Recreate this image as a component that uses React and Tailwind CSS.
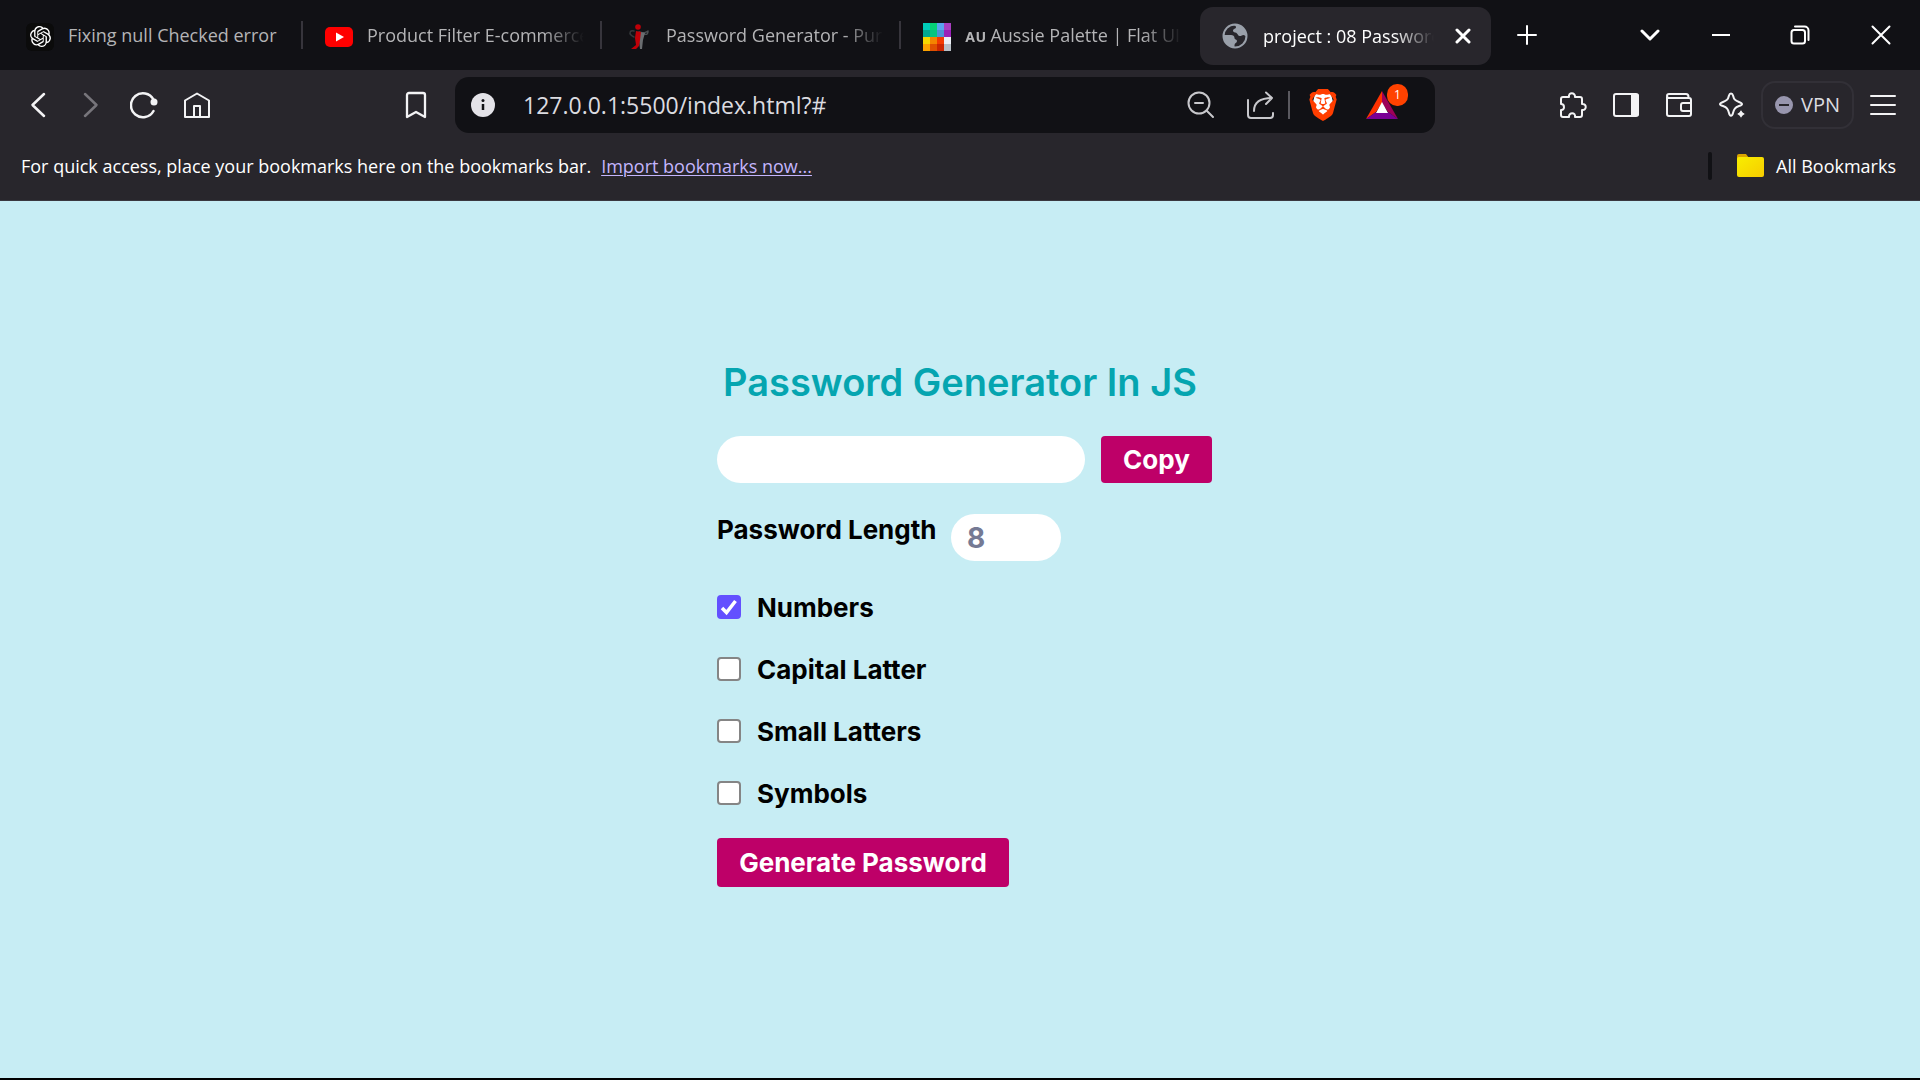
import React from "react";
import { SiOpenai, SiBrave } from "react-icons/si";

function Svg({ w = 28, h = 28, children, className = "" }) {
  return (
    <svg
      width={w}
      height={h}
      viewBox={`0 0 ${w} ${h}`}
      fill="none"
      stroke="currentColor"
      strokeWidth="2"
      strokeLinecap="round"
      strokeLinejoin="round"
      className={`shrink-0 ${className}`}
      aria-hidden="true"
    >
      {children}
    </svg>
  );
}

const YouTube = () => (
  <Svg>
    <rect x="0" y="4" width="28" height="20" rx="5" fill="#ff0000" stroke="none" />
    <path d="M11 9.500v9l8-4.500z" fill="#fff" stroke="none" />
  </Svg>
);

const OpenAI = () => (
  <span className="flex size-7 shrink-0 items-center justify-center rounded-md bg-[#0b0b0b]">
    <SiOpenai className="size-[21px] text-white" />
  </span>
);

const Figure = () => (
  <Svg>
    <path d="M10 8c-4-1-5 2-3 4s2 1 3 2" stroke="#34393c" strokeWidth="1.500" />
    <path d="M15 9c4 2 8 0 9-1M20 11c3 1 4 0 4-3" stroke="#4a4f52" strokeWidth="1.500" />
    <path d="M16 9l5 1-2 7-1 9h-2l-1-9z" fill="#6a6d70" stroke="none" />
    <circle cx="14" cy="4" r="2.800" fill="#c00008" stroke="none" />
    <path d="M12 8l5 1-1 8-1 6-3 3-5 0 5-4-1-7z" fill="#c00008" stroke="none" />
  </Svg>
);

const palette = [
  "#00cdb9", "#06d077", "#5aa4ee", "#a83fc0",
  "#02a890", "#06c47f", "#4c92d4", "#9a20b8",
  "#f5d800", "#f48400", "#f43a00", "#eceef5",
  "#fba200", "#e05000", "#cc2600", "#b8bfc6",
];

const Palette = () => (
  <Svg>
    {palette.map((c, i) => (
      <rect key={i} x={(i % 4) * 7} y={Math.floor(i / 4) * 7} width="7" height="7" fill={c} stroke="none" shapeRendering="crispEdges" />
    ))}
  </Svg>
);

const Globe = () => (
  <Svg>
    <circle cx="14" cy="14" r="11.500" stroke="#9aa0aa" />
    <path
      d="M11 2.500c4-1 9 .5 12 4.500 1.500 2.500 2 5 2 7.500-1-.5-1.500-1.500-2.500-1.500-2 0-2 1.500-4 1-2-.4-1.500-2.300-3.300-3.300-1.200-.7-3-.2-3.200-2 0-2 3-1.700 3-3.700 0-1.500-2.500-1.500-4-2.500zM3 13h7c2 0 3.500 1 3.500 3s2.500 1 2.500 3-2.500 2-2.500 4v2.500C7 25.500 2.500 20 3 13z"
      fill="#9aa0aa"
      stroke="none"
    />
  </Svg>
);

const tabs = [
  { icon: <OpenAI />, title: "Fixing null Checked error" },
  { icon: <YouTube />, title: "Product Filter E-commerce" },
  { icon: <Figure />, title: "Password Generator - Pure" },
  { icon: <Palette />, prefix: "ᴀᴜ", title: "Aussie Palette | Flat UI Colors" },
];

function FadedTitle({ prefix, children, fade = true }) {
  return (
    <span
      className={
        "min-w-0 flex-1 overflow-hidden whitespace-nowrap text-lg leading-7 " +
        (fade ? "[mask-image:linear-gradient(to_right,#000_calc(100%_-_40px),transparent)]" : "")
      }
    >
      {prefix ? <span className="mr-1 font-['Noto_Sans',sans-serif] font-semibold">{prefix}</span> : null}
      {children}
    </span>
  );
}

function TabStrip() {
  return (
    <div className="flex h-[70px] items-center bg-[#111115] pl-1 text-white">
      {tabs.map((t, i) => (
        <button key={t.title} type="button" className="flex h-full w-[299px] min-w-0 items-center pl-[22px] text-left text-[#b4b4b6]">
          <span className="mt-[3px]">{t.icon}</span>
          <span className="ml-[14px] flex min-w-0 flex-1">
            <FadedTitle prefix={t.prefix} fade={i > 0}>{t.title}</FadedTitle>
          </span>
          <span className={"ml-4 h-7 w-0.5 " + (i < 3 ? "bg-[#37353c]" : "")} />
        </button>
      ))}
      <div className="mt-[2px] flex h-[58px] w-[291px] min-w-0 items-center rounded-[13px] bg-[#28262c] pl-[21px] pr-5">
        <Globe />
        <span className="ml-[14px] flex min-w-0 flex-1">
          <FadedTitle>project : 08 Password Generator</FadedTitle>
        </span>
        <button type="button" aria-label="Close tab" className="ml-[21px]">
          <Svg w={16} h={16}><path d="M2 2l12 12M14 2L2 14" strokeWidth="3" /></Svg>
        </button>
      </div>
      <button type="button" aria-label="New tab" className="ml-[26px]">
        <Svg w={20} h={20}><path d="M10 1v18M1 10h18" /></Svg>
      </button>
      <div className="ml-auto flex items-center">
        <button type="button" aria-label="Search tabs" className="flex w-[68px] justify-center">
          <Svg w={20} h={12}><path d="M2 2l8 8 8-8" strokeWidth="3" /></Svg>
        </button>
        <button type="button" aria-label="Minimize" className="flex w-[74px] justify-center">
          <Svg w={20} h={20}><path d="M1 10h18" strokeLinecap="butt" /></Svg>
        </button>
        <button type="button" aria-label="Restore" className="flex w-[84px] justify-center">
          <Svg w={20} h={20}>
            <rect x="1.500" y="5" width="13.500" height="13.500" rx="2.500" />
            <path d="M5 1.500h9.500a4 4 0 0 1 4 4V15" />
          </Svg>
        </button>
        <button type="button" aria-label="Close" className="flex w-[78px] justify-center">
          <Svg w={20} h={20}><path d="M1.500 1.500l17 17M18.500 1.500l-17 17" /></Svg>
        </button>
      </div>
    </div>
  );
}

function ToolButton({ label, children, className = "" }) {
  return (
    <button type="button" aria-label={label} className={`flex h-12 w-[53px] shrink-0 items-center justify-center ${className}`}>
      {children}
    </button>
  );
}

function Toolbar() {
  return (
    <div className="flex h-[70px] items-center px-[11px] text-[#f3f3f5]">
      <ToolButton label="Back"><Svg><path d="M20 3L8.500 14 20 25" strokeWidth="2.500" /></Svg></ToolButton>
      <ToolButton label="Forward" className="text-[#77757b]"><Svg><path d="M8 3l11.500 11L8 25" strokeWidth="2.500" /></Svg></ToolButton>
      <ToolButton label="Reload">
        <Svg>
          <path d="M23.500 8.500A12 12 0 1 0 23.500 20" strokeWidth="2.500" />
          <circle cx="24" cy="11" r="3.500" fill="currentColor" stroke="none" />
        </Svg>
      </ToolButton>
      <ToolButton label="Home">
        <Svg>
          <path d="M2 26V9.500L14 2.500l12 7V26z" />
          <path d="M11 26V15h6v11" />
        </Svg>
      </ToolButton>
      <ToolButton label="Bookmark this tab" className="ml-[166px]">
        <Svg><path d="M5 4a2 2 0 0 1 2-2h14a2 2 0 0 1 2 2v22l-9-5-9 5z" strokeWidth="2.300" /></Svg>
      </ToolButton>

      <div className="ml-[13px] flex h-14 w-[980px] min-w-0 items-center rounded-[14px] bg-[#111115] pl-4">
        <Svg w={24} h={24}>
          <circle cx="12" cy="12" r="12" fill="#e4e3e8" stroke="none" />
          <path d="M12 11v6" stroke="#111115" strokeWidth="2.500" strokeLinecap="butt" />
          <circle cx="12" cy="7.500" r="1.500" fill="#111115" stroke="none" />
        </Svg>
        <input
          aria-label="Address"
          defaultValue="127.0.0.1:5500/index.html?#"
          className="ml-7 min-w-0 flex-1 bg-transparent text-[23px] text-[#dcdce0] outline-none"
        />
        <button type="button" aria-label="Zoom" className="text-[#c8c8cc]">
          <Svg><circle cx="12" cy="12" r="10.500" /><path d="M8 12h8M19.500 19.500L26 26" /></Svg>
        </button>
        <button type="button" aria-label="Share" className="ml-[31px] text-[#c8c8cc]">
          <Svg>
            <path d="M2 9v15a3 3 0 0 0 3 3h19a3 3 0 0 0 3-3v-2" />
            <path d="M8 20C8 11 14 7 26 7M20 1.500L26 7l-6 6" />
          </Svg>
        </button>
        <span className="ml-[14px] h-7 w-0.5 bg-[#5a595f]" />
        <button type="button" aria-label="Brave Shields" className="ml-4 grid place-items-center">
          <svg width="34" height="34" viewBox="0 0 34 34" className="col-start-1 row-start-1" aria-hidden="true">
            <path d="M9 6h16l2 8-3 9-7 5-7-5-3-9z" fill="#fff" />
          </svg>
          <SiBrave className="col-start-1 row-start-1 size-8 text-[#ff3e00]" />
        </button>
        <button type="button" aria-label="Brave Rewards" className="relative ml-[25px] mr-9">
          <Svg w={34} h={34}>
            <path d="M17 3v12l-6 9L1 31z" fill="#ff3200" stroke="none" />
            <path d="M17 3l16 28-10-7-6-9z" fill="#9e0058" stroke="none" />
            <path d="M1 31l10-7h12l10 7z" fill="#7a0094" stroke="none" />
            <path d="M17 14l6 11H11z" fill="#fff" stroke="none" />
          </Svg>
          <span className="absolute -right-[9px] -top-1 flex h-[22px] w-[21px] items-center justify-center rounded-[10px] bg-[#ff4200] text-xs text-white">1</span>
        </button>
      </div>

      <div className="ml-auto flex items-center">
        <ToolButton label="Extensions">
          <Svg>
            <path d="M2 8q0-2 2-2h6c-1-5 6.500-5 6 0h5q2 0 2 2v5c5-.5 5 6.500 0 6v5q0 2-2 2h-5c1-5-6.500-5-6 0H4q-2 0-2-2v-5c4 .5 4-6 0-6z" />
          </Svg>
        </ToolButton>
        <ToolButton label="Sidebar">
          <Svg>
            <rect x="2" y="3" width="24" height="22" rx="2" />
            <path d="M19 3h6q2 0 2 2v18q0 2-2 2h-6z" fill="currentColor" stroke="none" />
          </Svg>
        </ToolButton>
        <ToolButton label="Wallet">
          <Svg>
            <path d="M2 6v17q0 2 2 2h20q2 0 2-2V9q0-2-2-2H4Q2 7 2 5q0-2 2-2h17q2.500 0 2.500 3" />
            <path d="M26 12h-8q-2 0-2 2v4q0 2 2 2h8" />
          </Svg>
        </ToolButton>
        <ToolButton label="Leo AI">
          <Svg>
            <path d="M13 2.500q1.500 0 2 2c1 4 2 5 6 6.500 4 1.500 4 3 0 4-4 1.500-5 3-6 7-.8 3.500-3.200 3.500-4 0-1-4-2-5.500-6-7-4-1-4-2.500 0-4 4-1.500 5-2.500 6-6.500q.5-2 2-2z" />
            <path d="M23 18q1 4 5 5-4 1-5 5-1-4-5-5 4-1 5-5z" fill="currentColor" stroke="#28262c" strokeWidth="1" />
          </Svg>
        </ToolButton>
        <button type="button" className="ml-0.5 mr-0.5 flex h-12 items-center rounded-[14px] border-2 border-[#323037] px-3 text-xl text-[#dcdce0]">
          <Svg w={18} h={18} className="mr-2">
            <circle cx="9" cy="9" r="9" fill="#9896ae" stroke="none" />
            <path d="M4 9h10" stroke="#28262c" strokeLinecap="butt" />
          </Svg>
          VPN
        </button>
        <ToolButton label="Menu">
          <Svg><path d="M2 5h24M2 14h24M2 23h24" /></Svg>
        </ToolButton>
      </div>
    </div>
  );
}

function BookmarksBar() {
  return (
    <div className="flex h-[61px] items-center border-b border-[#3a383f] pb-2 pl-[21px] pr-6 text-lg leading-7 text-white">
      <span>For quick access, place your bookmarks here on the bookmarks bar.</span>
      <a href="#import" className="ml-2.5 text-[#c4b5fd] underline decoration-1 underline-offset-2">Import bookmarks now...</a>
      <span className="ml-auto h-7 w-1 rounded-full bg-[#111115]" />
      <button type="button" className="ml-[25px] flex items-center">
        <svg width="27" height="24" viewBox="0 0 27 24" className="mr-3" aria-hidden="true">
          <defs>
            <linearGradient id="folder" x1="0" y1="0" x2="1" y2="1">
              <stop offset="0" stopColor="#f8ee00" />
              <stop offset="1" stopColor="#f6cc00" />
            </linearGradient>
          </defs>
          <path d="M0 2q0-2 2-2h7l3 4v4H0z" fill="#d9a400" />
          <rect x="0" y="3" width="27" height="20" rx="2" fill="url(#folder)" />
        </svg>
        All Bookmarks
      </button>
    </div>
  );
}

const options = [
  { id: "numbers", label: "Numbers", on: true },
  { id: "capital", label: "Capital Latter" },
  { id: "small", label: "Small Latters" },
  { id: "symbols", label: "Symbols" },
];

function Generator() {
  return (
    <main className="flex-1 bg-[#c7edf4] font-['Inter',sans-serif] text-black">
      <form className="mx-auto w-[486px] pt-[151px]" onSubmit={(e) => e.preventDefault()}>
        <h1 className="whitespace-nowrap text-center text-[38px] font-semibold leading-[60px] text-[#05a5b0]">
          Password Generator In JS
        </h1>
        <div className="mt-6 flex w-max gap-4">
          <input aria-label="Generated password" readOnly className="h-[47px] w-[368px] rounded-full bg-white px-4 text-2xl outline-none" />
          <button type="button" className="h-[47px] w-[111px] rounded bg-[#be0068] text-[26px] font-bold text-white">Copy</button>
        </div>
        <div className="mt-[31px] flex gap-4">
          <label htmlFor="length" className="w-[218px] whitespace-nowrap text-[26px] font-bold leading-8">Password Length</label>
          <input id="length" placeholder="8" className="h-[47px] w-[110px] rounded-full bg-white px-4 text-[28px] font-bold outline-none placeholder:text-[#757a94]" />
        </div>
        <div className="mt-[30px] flex flex-col gap-[30px]">
          {options.map((o) => (
            <div key={o.id} className="flex h-8 items-center">
              <span className="grid size-6">
                <input
                  id={o.id}
                  type="checkbox"
                  defaultChecked={o.on}
                  className="peer col-start-1 row-start-1 size-6 appearance-none rounded border-2 border-[#858585] bg-white checked:border-[#6350ff] checked:bg-[#6350ff]"
                />
                <Svg w={24} h={24} className="pointer-events-none invisible col-start-1 row-start-1 text-white peer-checked:visible">
                  <path d="M5 13l4.500 4.500L18.500 6" strokeWidth="3.500" strokeLinecap="butt" strokeLinejoin="miter" />
                </Svg>
              </span>
              <label htmlFor={o.id} className="ml-4 text-[26px] font-bold">{o.label}</label>
            </div>
          ))}
        </div>
        <button type="submit" className="mt-[29px] h-[49px] w-[292px] whitespace-nowrap rounded bg-[#be0068] text-[26px] font-bold text-white">
          Generate Password
        </button>
      </form>
    </main>
  );
}

export default function App() {
  return (
    <div className="flex min-h-screen flex-col border-b-2 border-black font-['Open_Sans',sans-serif]">
      <header className="bg-[#28262c]">
        <TabStrip />
        <Toolbar />
        <BookmarksBar />
      </header>
      <Generator />
    </div>
  );
}
